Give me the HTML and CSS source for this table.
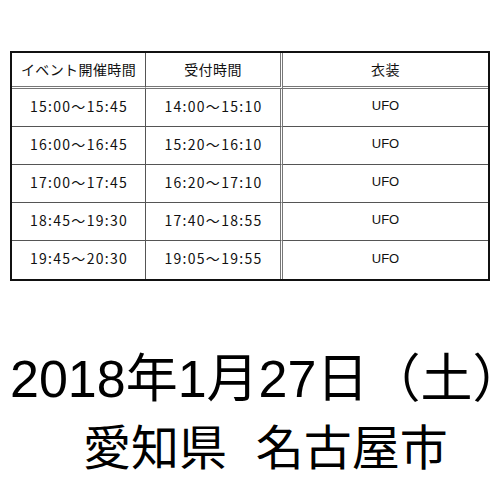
FILE: index.html
```html
<!DOCTYPE html>
<html lang="ja">
<head>
<meta charset="utf-8">
<link rel="stylesheet" href="styles.css">
</head>
<body>
<div class="page">
  <table class="schedule">
    <thead>
      <tr>
        <th class="c1">イベント開催時間</th>
        <th class="c2">受付時間</th>
        <th class="c3">衣装</th>
      </tr>
    </thead>
    <tbody>
      <tr><td class="c1 t">15:00～15:45</td><td class="c2 t">14:00～15:10</td><td class="c3 u">UFO</td></tr>
      <tr><td class="c1 t">16:00～16:45</td><td class="c2 t">15:20～16:10</td><td class="c3 u">UFO</td></tr>
      <tr><td class="c1 t">17:00～17:45</td><td class="c2 t">16:20～17:10</td><td class="c3 u">UFO</td></tr>
      <tr><td class="c1 t">18:45～19:30</td><td class="c2 t">17:40～18:55</td><td class="c3 u">UFO</td></tr>
      <tr class="last"><td class="c1 t">19:45～20:30</td><td class="c2 t">19:05～19:55</td><td class="c3 u">UFO</td></tr>
    </tbody>
  </table>
  <div class="info">
    <p class="date">2018年1月27日（土<span class="close">）</span></p>
    <p class="place">愛知県 名古屋市</p>
  </div>
</div>
</body>
</html>
```
FILE: styles.css
```css
html, body {
  margin: 0;
  padding: 0;
  background: #fff;
}
.page {
  width: 500px;
  height: 500px;
  padding-top: 51px;
  box-sizing: border-box;
  font-family: "Noto Sans CJK JP", "Liberation Sans", sans-serif;
  color: #111;
  overflow: hidden;
}
.schedule {
  margin-left: 10px;
  width: 480px;
  table-layout: fixed;
  border-collapse: separate;
  border-spacing: 0;
  border: 2px solid #111;
}
.schedule th,
.schedule td {
  box-sizing: border-box;
  padding: 0;
  text-align: center;
  vertical-align: middle;
  border-bottom: 1px solid #555;
  height: 38px;
  font-weight: normal;
  line-height: 1;
}
.schedule th {
  height: 36px;
  border-bottom: 3px double #777;
  font-size: 14px;
  letter-spacing: 0.4px;
  padding-bottom: 2px;
}
.schedule .last td {
  border-bottom: none;
}
.c1 {
  width: 134px;
  border-right: 1px solid #555;
}
.c2 {
  width: 137px;
  border-right: 3px double #777;
}
.c3 {
  width: 205px;
}
.t {
  font-size: 14px;
  letter-spacing: 1.3px;
  padding-bottom: 4px !important;
  padding-left: 1px !important;
}
.u {
  font-family: "Liberation Sans", sans-serif;
  font-size: 13px;
  padding-bottom: 4px !important;
}
.info {
  margin-top: 66px;
  color: #000;
  font-family: "Liberation Sans", "Noto Sans CJK JP", sans-serif;
}
.info p {
  margin: 0;
  line-height: 65px;
  white-space: nowrap;
}
.date {
  font-size: 52px;
  padding-left: 10px;
}
.close {
  letter-spacing: -26px;
}
.place {
  font-family: "Noto Sans CJK JP", sans-serif;
  font-size: 48px;
  padding-left: 83px;
  word-spacing: 18px;
}
```
